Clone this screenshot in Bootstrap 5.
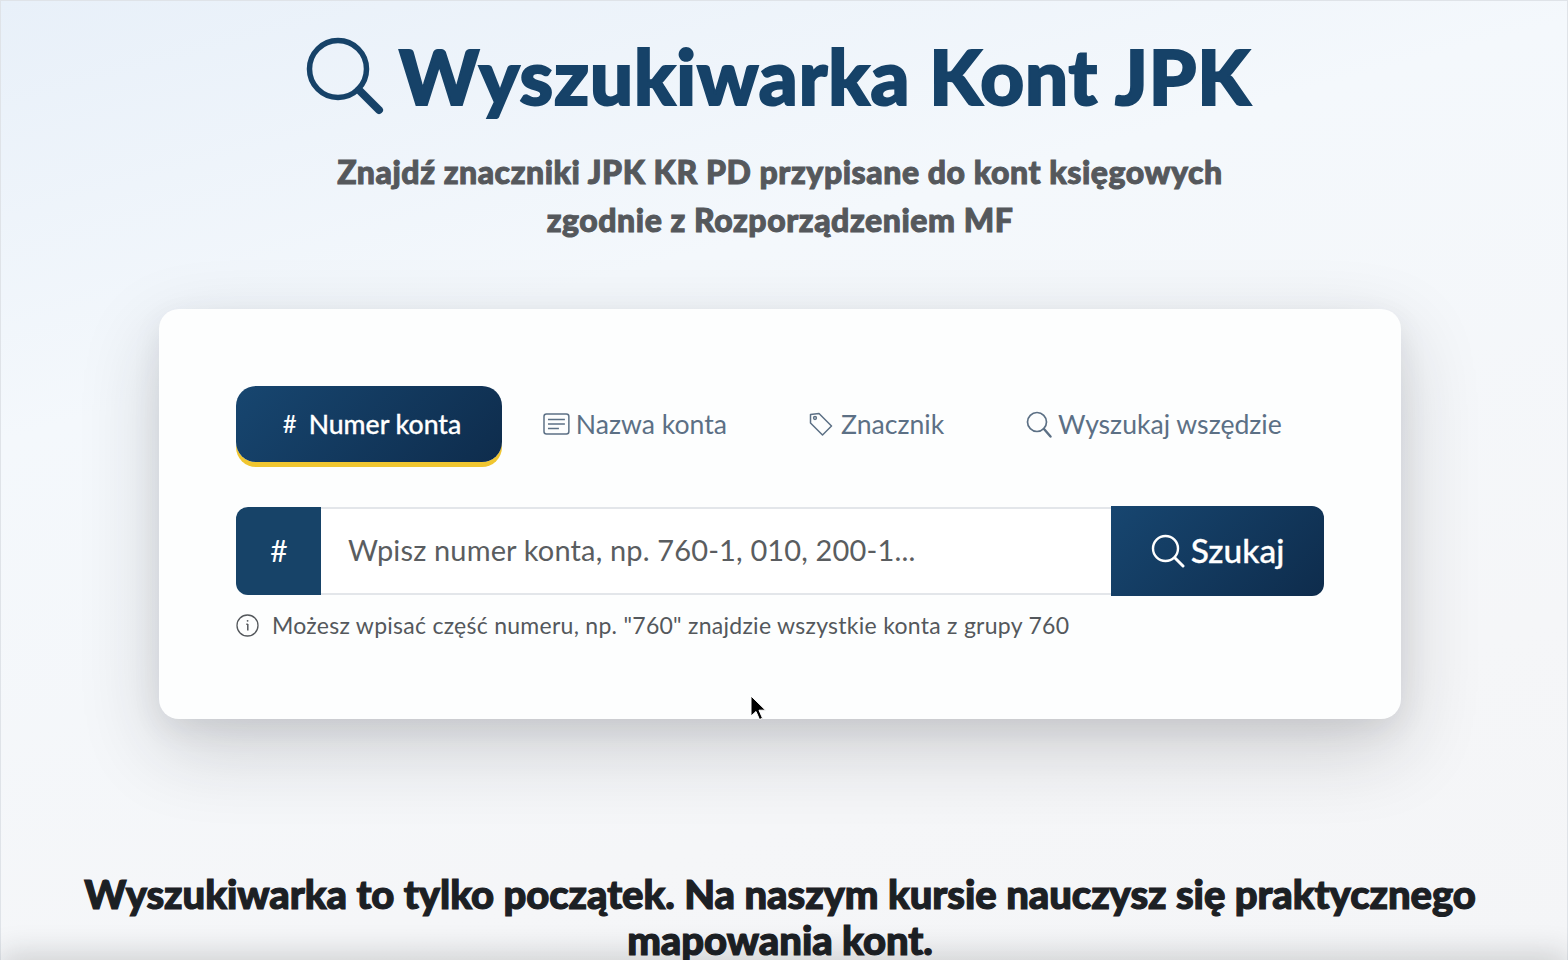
<!DOCTYPE html>
<html lang="pl">
<head>
<meta charset="utf-8">
<title>Wyszukiwarka Kont JPK</title>
<link href="https://cdn.jsdelivr.net/npm/bootstrap@5.3.0/dist/css/bootstrap.min.css" rel="stylesheet">
<style>
html,body{height:960px;overflow:hidden}
body{font-family:"Lato","Noto Sans",sans-serif;background:linear-gradient(165deg,#e8f0f9 0%,#f4f8fc 32%,#f5f6f8 75%,#f4f5f7 100%);position:relative;padding-right:8px;box-shadow:inset 1px 1px 0 #dfe3e8,inset -1px 0 0 #dfe3e8}
.pg-head{padding-top:37px}
.pg-title{font-size:76px;font-weight:900;line-height:76px;color:#164268;margin:0 3px 0 0;gap:15px;letter-spacing:.9px;-webkit-text-stroke:2px #164268}
.pg-sub{font-size:32px;font-weight:900;line-height:48px;color:#55585c;margin:33px 0 0;letter-spacing:.55px;-webkit-text-stroke:1px #55585c}
.srch-card{width:1242px;height:410px;margin:65px auto 0;background:#fdfefe;border-radius:20px;padding:77px 77px 0;box-shadow:0 28px 80px rgba(30,32,36,.19),0 10px 30px rgba(30,32,36,.07)}
.tab-row{height:76px}
.tab-item{font-size:26.6px;line-height:32px;color:#5c7085;display:flex;align-items:center;background:none;border:0;padding:0;gap:6px;height:76px;white-space:nowrap}
.tab-on{width:266px;justify-content:center;color:#fff;font-weight:500;border-radius:20px;background:linear-gradient(135deg,#174670,#0e2c4c);box-shadow:0 5px 0 #f0c630;margin-right:41px;gap:12px;padding-left:6px;-webkit-text-stroke:.3px #fff}
.tab-on span.hs{font-size:24px;-webkit-text-stroke:0}
.tab-2{width:184px;margin-right:82px}
.tab-3{width:137px;margin-right:80px;gap:8px}
.srch-row{margin-top:44px;height:90px;width:1088px}
.srch-pre{width:85px;background:#174368;color:#fff;font-size:30px;border-radius:12px 0 0 12px;margin-top:1px;height:88px;padding:0 0 2px 1px}
.srch-in{flex:1;height:88px;margin-top:1px;border:0;border-top:2px solid #e3e6ea;border-bottom:2px solid #e3e6ea;padding:0 27px 3px;font-family:inherit;font-size:29px;background:#fff;color:#555;outline:0;letter-spacing:.15px}
.srch-in::placeholder{color:#5a5d60;opacity:1}
.srch-btn{width:213px;height:90px;border:0;border-radius:0 12px 12px 0;background:linear-gradient(135deg,#174670,#0e2c4c);color:#fff;font-size:33.5px;font-weight:500;gap:6px;padding-bottom:2px;-webkit-text-stroke:.3px #fff}
.srch-hint{margin-top:15px;font-size:23px;line-height:28px;color:#54585c;gap:13px;letter-spacing:.27px}
.cta-line{position:relative;margin:152px auto 0;width:1420px;font-size:40px;line-height:46px;font-weight:900;color:#1c2024;letter-spacing:-.05px;-webkit-text-stroke:1.2px #1c2024}
.btm-shade{position:absolute;left:0;right:0;bottom:-40px;height:40px;box-shadow:0 -6px 30px rgba(30,32,36,.18)}
.cur-ptr{position:absolute;left:749px;top:695px}
</style>
</head>
<body>
<header class="pg-head text-center">
  <h1 class="pg-title d-flex justify-content-center align-items-center">
    <svg width="78" height="78" viewBox="0 0 78 78" fill="none" stroke="#164268" aria-hidden="true"><circle cx="32" cy="32" r="28.5" stroke-width="5.5"/><path d="M53 53 73 73" stroke-width="8" stroke-linecap="round"/></svg>
    <span>Wyszukiwarka Kont JPK</span>
  </h1>
  <p class="pg-sub">Znajdź znaczniki JPK KR PD przypisane do kont księgowych<br>zgodnie z Rozporządzeniem MF</p>
</header>
<main class="srch-card">
  <div class="tab-row d-flex">
    <button class="tab-item tab-on"><span class="hs">#</span><span>Numer konta</span></button>
    <button class="tab-item tab-2">
      <svg width="27" height="22" viewBox="0 0 27 22" fill="none" stroke="#5c7085" stroke-width="1.5"><rect x="1" y="1" width="25" height="20" rx="2.5"/><path d="M5 6.5h17M5 11h17M5 15.5h11"/></svg>
      <span>Nazwa konta</span></button>
    <button class="tab-item tab-3">
      <svg width="24" height="24" viewBox="0 0 24 24" fill="none" stroke="#5c7085" stroke-width="1.5"><path d="M1.5 2.5 10 1.5 22.5 14 13.5 23 1.5 11Z" stroke-linejoin="round"/><circle cx="6" cy="6" r="1.4"/></svg>
      <span>Znacznik</span></button>
    <button class="tab-item">
      <svg width="26" height="27" viewBox="0 0 26 27" fill="none" stroke="#5c7085" stroke-width="1.7"><circle cx="11" cy="11" r="9.5"/><path d="M18 18 24.5 25.5" stroke-width="2.4" stroke-linecap="round"/></svg>
      <span>Wyszukaj wszędzie</span></button>
  </div>
  <div class="srch-row d-flex align-items-start">
    <div class="srch-pre d-flex align-items-center justify-content-center">#</div>
    <input class="srch-in" type="text" placeholder="Wpisz numer konta, np. 760-1, 010, 200-1...">
    <button class="srch-btn d-flex align-items-center justify-content-center">
      <svg width="34" height="34" viewBox="0 0 34 34" fill="none" stroke="#fff" stroke-width="2.4"><circle cx="14.5" cy="14.5" r="12.5"/><path d="M24 24 32 32" stroke-width="3" stroke-linecap="round"/></svg>
      <span>Szukaj</span></button>
  </div>
  <div class="srch-hint d-flex align-items-center">
    <svg width="23" height="23" viewBox="0 0 23 23" fill="none" stroke="#54585c" stroke-width="1.3"><circle cx="11.5" cy="11.5" r="10.5"/><path d="M11.8 10v6.5M10.3 10.3h1.5" stroke-width="1.5"/><circle cx="11.6" cy="6.8" r=".9" fill="#54585c" stroke="none"/></svg>
    <span>Możesz wpisać część numeru, np. "760" znajdzie wszystkie konta z grupy 760</span>
  </div>
</main>
<h2 class="cta-line text-center">Wyszukiwarka to tylko początek. Na naszym kursie nauczysz się praktycznego mapowania kont.</h2>
<div class="btm-shade"></div>
<svg class="cur-ptr" width="17" height="28" viewBox="0 0 17 28"><path d="M2 1v20l5-4.5 3.5 8 3-1.3-3.5-8h6.5Z" fill="#000" stroke="#fff" stroke-width="1"/></svg>
<script src="https://cdn.jsdelivr.net/npm/bootstrap@5.3.0/dist/js/bootstrap.bundle.min.js"></script>
</body>
</html>
